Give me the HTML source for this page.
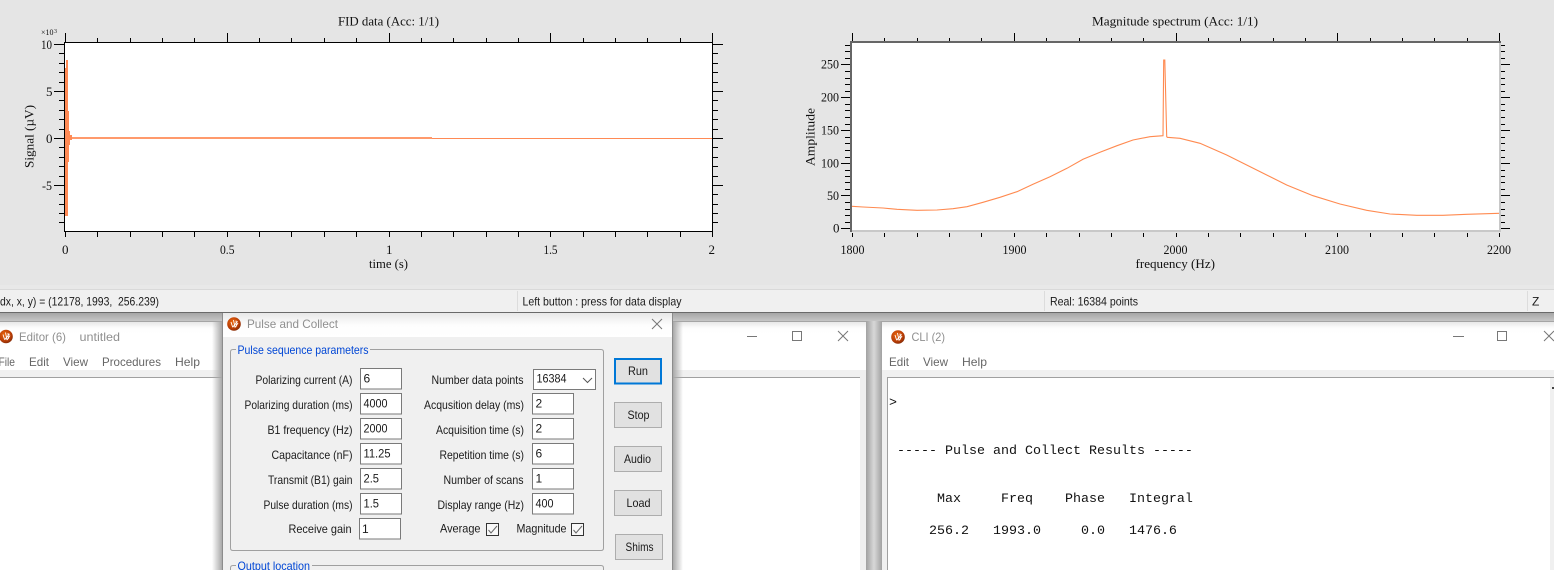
<!DOCTYPE html>
<html><head><meta charset="utf-8"><style>
html,body{margin:0;padding:0;width:1554px;height:570px;overflow:hidden;background:#e5e5e5}
svg{display:block}
.s{font-family:"Liberation Serif",serif;font-size:13px;fill:#111}
.u{font-family:"Liberation Sans",sans-serif;font-size:12px;fill:#1a1a1a;white-space:pre}
.g{font-family:"Liberation Sans",sans-serif;font-size:12px;fill:#8f8f8f}
.m{font-family:"Liberation Sans",sans-serif;font-size:12px;fill:#666}
.b{font-family:"Liberation Sans",sans-serif;font-size:12px;fill:#0046d5}
.c{font-family:"Liberation Mono",monospace;font-size:13.33px;fill:#111;white-space:pre}
</style></head><body>
<svg xmlns="http://www.w3.org/2000/svg" width="1554" height="570" viewBox="0 0 1554 570">
<defs>
<linearGradient id="band" x1="0" y1="0" x2="0" y2="1"><stop offset="0" stop-color="#a6a6a6"/><stop offset="1" stop-color="#c6c6c6"/></linearGradient>
<linearGradient id="gap" x1="0" y1="0" x2="1" y2="0"><stop offset="0" stop-color="#a8a8a8"/><stop offset=".5" stop-color="#d8d8d8"/><stop offset="1" stop-color="#a8a8a8"/></linearGradient>
<linearGradient id="tt" x1="0" y1="0" x2="0" y2="1"><stop offset="0" stop-color="#e8e8e8"/><stop offset=".5" stop-color="#fdfdfd"/><stop offset="1" stop-color="#fff"/></linearGradient>
<linearGradient id="shr" x1="0" y1="0" x2="1" y2="0"><stop offset="0" stop-color="#a9a9a9"/><stop offset="1" stop-color="#a9a9a9" stop-opacity="0"/></linearGradient>
<linearGradient id="shl" x1="1" y1="0" x2="0" y2="0"><stop offset="0" stop-color="#a9a9a9"/><stop offset="1" stop-color="#a9a9a9" stop-opacity="0"/></linearGradient>
<radialGradient id="ic" cx=".4" cy=".35" r=".7"><stop offset="0" stop-color="#e8640c"/><stop offset=".7" stop-color="#b63c06"/><stop offset="1" stop-color="#7d2a08"/></radialGradient>
<g id="icon"><circle cx="7" cy="7" r="6.8" fill="url(#ic)"/><path d="M4 5l1.6 5M6.5 3l1.5 7.5M9 3.5l.4 6M8 10.5l3-4.5M5.6 10.3l4.9-6" stroke="#fff" stroke-width=".9" fill="none"/></g>
</defs>

<!-- Left plot -->
<rect x="64.5" y="42.5" width="648" height="189" fill="#fff" stroke="#000"/>
<path fill="none" stroke="#000" d="M65.5 33V42M227.5 33V42M389.5 33V42M550.5 33V42M712.5 33V42M97.5 38V42M130.5 38V42M162.5 38V42M194.5 38V42M259.5 38V42M291.5 38V42M324.5 38V42M356.5 38V42M421.5 38V42M453.5 38V42M486.5 38V42M518.5 38V42M583.5 38V42M615.5 38V42M647.5 38V42M680.5 38V42"/>
<path fill="none" stroke="#000" d="M65.5 232V237M97.5 232V237M130.5 232V237M162.5 232V237M194.5 232V237M227.5 232V237M259.5 232V237M291.5 232V237M324.5 232V237M356.5 232V237M389.5 232V237M421.5 232V237M453.5 232V237M486.5 232V237M518.5 232V237M550.5 232V237M583.5 232V237M615.5 232V237M647.5 232V237M680.5 232V237M712.5 232V237"/>
<path fill="none" stroke="#000" d="M54 44.5H64M54 91.5H64M54 138.5H64M54 185.5H64M59 53.5H64M59 63.5H64M59 72.5H64M59 82.5H64M59 100.5H64M59 110.5H64M59 119.5H64M59 129.5H64M59 147.5H64M59 157.5H64M59 166.5H64M59 176.5H64M59 194.5H64M59 204.5H64M59 213.5H64M59 222.5H64"/>
<path fill="none" stroke="#000" d="M713 44.5H723M713 91.5H723M713 138.5H723M713 185.5H723M713 53.5H718M713 63.5H718M713 72.5H718M713 82.5H718M713 100.5H718M713 110.5H718M713 119.5H718M713 129.5H718M713 147.5H718M713 157.5H718M713 166.5H718M713 176.5H718M713 194.5H718M713 204.5H718M713 213.5H718M713 222.5H718"/>
<rect x="65" y="68" width="1.5" height="148" fill="#ff8a55"/><rect x="66" y="60" width="2" height="156" fill="#ff8a55"/>
<rect x="68" y="111" width="1" height="51" fill="#ff8a55"/><rect x="69" y="131" width="1" height="14" fill="#ff8a55"/><rect x="70" y="135" width="2" height="5" fill="#ff8a55"/>
<rect x="72" y="137" width="360" height="2" fill="#ff9a6c"/><rect x="432" y="138" width="280" height="1" fill="#ff8a55"/>

<text class="s" x="338" y="25.500" textLength="101" lengthAdjust="spacingAndGlyphs">FID data (Acc: 1/1)</text>
<text class="s" x="41" y="35" style="font-size:8px" textLength="12.5" lengthAdjust="spacingAndGlyphs">×10</text><text class="s" x="54" y="33" style="font-size:6px">3</text>
<text class="s" x="41" y="49" textLength="11" lengthAdjust="spacingAndGlyphs">10</text>
<text class="s" x="46" y="96">5</text><text class="s" x="46" y="143">0</text>
<text class="s" x="42" y="190" textLength="10" lengthAdjust="spacingAndGlyphs">-5</text>
<text class="s" x="62" y="254">0</text><text class="s" x="220" y="254" textLength="14.5" lengthAdjust="spacingAndGlyphs">0.5</text><text class="s" x="386" y="254">1</text><text class="s" x="543.5" y="254" textLength="14" lengthAdjust="spacingAndGlyphs">1.5</text><text class="s" x="708.5" y="254">2</text>
<text class="s" x="369" y="268" textLength="39" lengthAdjust="spacingAndGlyphs">time (s)</text>
<text class="s" transform="translate(33.5 168) rotate(-90)" textLength="63" lengthAdjust="spacingAndGlyphs">Signal (µV)</text>

<!-- Right plot -->
<rect x="851" y="42" width="649" height="189" fill="#fff"/>
<path fill="none" stroke="#c8c8c8" stroke-width="2" d="M852 231H1500V43"/>
<path fill="none" stroke="#666" stroke-width="2" d="M851 232V42H1501"/>
<path fill="none" stroke="#000" d="M852.5 33V41M1014.5 33V41M1176.5 33V41M1337.5 33V41M1499.5 33V41M884.5 38V41M917.5 38V41M949.5 38V41M981.5 38V41M1046.5 38V41M1079.5 38V41M1111.5 38V41M1143.5 38V41M1208.5 38V41M1240.5 38V41M1273.5 38V41M1305.5 38V41M1370.5 38V41M1402.5 38V41M1434.5 38V41M1467.5 38V41"/>
<path fill="none" stroke="#000" d="M852.5 233V237M884.5 233V237M917.5 233V237M949.5 233V237M981.5 233V237M1014.5 233V237M1046.5 233V237M1079.5 233V237M1111.5 233V237M1143.5 233V237M1176.5 233V237M1208.5 233V237M1240.5 233V237M1273.5 233V237M1305.5 233V237M1337.5 233V237M1370.5 233V237M1402.5 233V237M1434.5 233V237M1467.5 233V237M1499.5 233V237"/>
<path fill="none" stroke="#000" d="M841 64.5H850M841 97.5H850M841 130.5H850M841 163.5H850M841 195.5H850M841 228.5H850M845 45.5H850M845 51.5H850M845 58.5H850M845 71.5H850M845 78.5H850M845 84.5H850M845 91.5H850M845 104.5H850M845 110.5H850M845 117.5H850M845 124.5H850M845 137.5H850M845 143.5H850M845 150.5H850M845 157.5H850M845 170.5H850M845 176.5H850M845 182.5H850M845 189.5H850M845 202.5H850M845 209.5H850M845 215.5H850M845 222.5H850"/>
<path fill="none" stroke="#000" d="M1501 64.5H1510M1501 97.5H1510M1501 130.5H1510M1501 163.5H1510M1501 195.5H1510M1501 228.5H1510M1501 45.5H1505M1501 51.5H1505M1501 58.5H1505M1501 71.5H1505M1501 78.5H1505M1501 84.5H1505M1501 91.5H1505M1501 104.5H1505M1501 110.5H1505M1501 117.5H1505M1501 124.5H1505M1501 137.5H1505M1501 143.5H1505M1501 150.5H1505M1501 157.5H1505M1501 170.5H1505M1501 176.5H1505M1501 182.5H1505M1501 189.5H1505M1501 202.5H1505M1501 209.5H1505M1501 215.5H1505M1501 222.5H1505"/>
<path fill="none" stroke="#ff8a50" stroke-width="1.1" d="M852 206.3L863 207L883 208L897 209.3L917 210.3L937 210L953 208.7L967 206.7L983 202.3L1000 197.3L1017 191.7L1033 184.3L1050 176.7L1067 168.3L1083 159.3L1100 152.3L1117 145.7L1133 140L1150 136.7L1163 135.7L1163.7 60L1164.8 60L1166.7 136.5L1167.3 137.3L1180 138.3L1200 143.3L1226.7 155L1246.7 165L1266.7 175L1286.7 185L1313 195.7L1340 204L1366.7 210.3L1390 214L1416.7 215.3L1443 215.3L1466.7 214.3L1499 213.3"/>

<text class="s" x="1092" y="25.500" textLength="166" lengthAdjust="spacingAndGlyphs">Magnitude spectrum (Acc: 1/1)</text>
<text class="s" x="821" y="68.500" textLength="18" lengthAdjust="spacingAndGlyphs">250</text>
<text class="s" x="821" y="101.500" textLength="18" lengthAdjust="spacingAndGlyphs">200</text>
<text class="s" x="821" y="134.500" textLength="18" lengthAdjust="spacingAndGlyphs">150</text>
<text class="s" x="821" y="167.500" textLength="18" lengthAdjust="spacingAndGlyphs">100</text>
<text class="s" x="827" y="200" textLength="12" lengthAdjust="spacingAndGlyphs">50</text>
<text class="s" x="833" y="232.500">0</text>
<text class="s" x="840.500" y="254" textLength="24" lengthAdjust="spacingAndGlyphs">1800</text>
<text class="s" x="1002.500" y="254" textLength="24" lengthAdjust="spacingAndGlyphs">1900</text>
<text class="s" x="1163.500" y="254" textLength="24" lengthAdjust="spacingAndGlyphs">2000</text>
<text class="s" x="1325" y="254" textLength="24" lengthAdjust="spacingAndGlyphs">2100</text>
<text class="s" x="1487" y="254" textLength="24" lengthAdjust="spacingAndGlyphs">2200</text>
<text class="s" x="1135.500" y="268" textLength="79.500" lengthAdjust="spacingAndGlyphs">frequency (Hz)</text>
<text class="s" transform="translate(814.5 166) rotate(-90)" textLength="58" lengthAdjust="spacingAndGlyphs">Amplitude</text>

<!-- Status bar -->
<rect x="0" y="285" width="1554" height="4" fill="#e8e8e8"/>
<rect x="0" y="289" width="1554" height="1" fill="#d9d9d9"/>
<rect x="0" y="290" width="1554" height="22" fill="#f0f0f0"/>
<rect x="0" y="312" width="1554" height="1" fill="#6a6a6a"/>
<rect x="517" y="291" width="1" height="20" fill="#dcdcdc"/><rect x="1044" y="291" width="1" height="20" fill="#dcdcdc"/><rect x="1527" y="291" width="1" height="20" fill="#dcdcdc"/>
<text class="u" x="0" y="305.500" textLength="159" lengthAdjust="spacingAndGlyphs" xml:space="preserve">dx, x, y) = (12178, 1993,  256.239)</text>
<text class="u" x="522.500" y="305.500" textLength="159" lengthAdjust="spacingAndGlyphs">Left button : press for data display</text>
<text class="u" x="1050" y="305.500" textLength="88" lengthAdjust="spacingAndGlyphs">Real: 16384 points</text>
<text class="u" x="1532" y="305.500">Z</text>

<!-- Backdrop -->
<rect x="0" y="313" width="1554" height="8" fill="url(#band)"/>
<rect x="867" y="321" width="14" height="249" fill="url(#gap)"/>

<!-- Editor window -->
<rect x="0" y="321" width="867" height="249" fill="#fff"/>
<rect x="0" y="321" width="867" height="1" fill="#a5a5a5"/>
<rect x="866" y="321" width="1" height="249" fill="#a5a5a5"/>
<rect x="0" y="322" width="866" height="12" fill="url(#tt)"/>
<rect x="0" y="370" width="866" height="200" fill="#f0f0f0"/>
<rect x="0" y="377" width="860" height="193" fill="#fff"/>
<rect x="0" y="377" width="860" height="1" fill="#a0a0a0"/>
<use href="#icon" x="-1" y="329.500"/>
<text class="g" x="19" y="341" textLength="47" lengthAdjust="spacingAndGlyphs">Editor (6)</text>
<text class="g" x="79.500" y="341" textLength="40.500" lengthAdjust="spacingAndGlyphs">untitled</text>
<text class="m" x="-1.500" y="366" textLength="16.500" lengthAdjust="spacingAndGlyphs">File</text>
<text class="m" x="29" y="366" textLength="20" lengthAdjust="spacingAndGlyphs">Edit</text>
<text class="m" x="63" y="366" textLength="25" lengthAdjust="spacingAndGlyphs">View</text>
<text class="m" x="102" y="366" textLength="59" lengthAdjust="spacingAndGlyphs">Procedures</text>
<text class="m" x="175" y="366" textLength="25" lengthAdjust="spacingAndGlyphs">Help</text>
<path fill="none" stroke="#777" d="M747 336.500H757M792.500 331.500H801.500V340.500H792.500ZM838 331L848 341M848 331L838 341"/>

<!-- CLI window -->
<rect x="881" y="321" width="673" height="249" fill="#fff"/>
<rect x="881" y="321" width="673" height="1" fill="#a5a5a5"/>
<rect x="881" y="321" width="1" height="249" fill="#a5a5a5"/>
<rect x="882" y="322" width="672" height="12" fill="url(#tt)"/>
<rect x="882" y="370" width="672" height="200" fill="#f0f0f0"/>
<rect x="887" y="377" width="663" height="193" fill="#fff"/>
<rect x="887" y="377" width="667" height="1" fill="#a0a0a0"/>
<rect x="887" y="377" width="1" height="193" fill="#a0a0a0"/>
<rect x="1552" y="387" width="2" height="2" fill="#444"/>
<use href="#icon" x="891" y="330"/>
<text class="g" x="911.500" y="341" textLength="33.500" lengthAdjust="spacingAndGlyphs">CLI (2)</text>
<text class="m" x="889" y="366" textLength="20" lengthAdjust="spacingAndGlyphs">Edit</text>
<text class="m" x="923" y="366" textLength="25" lengthAdjust="spacingAndGlyphs">View</text>
<text class="m" x="962" y="366" textLength="25" lengthAdjust="spacingAndGlyphs">Help</text>
<path fill="none" stroke="#777" d="M1453 336.500H1464M1497.500 331.500H1506.500V340.500H1497.500ZM1544 331L1554 341M1554 331L1544 341"/>
<text class="c" x="889" y="406">&gt;</text>
<text class="c" x="889" y="454" xml:space="preserve"> ----- Pulse and Collect Results -----</text>
<text class="c" x="889" y="502" xml:space="preserve">      Max     Freq    Phase   Integral</text>
<text class="c" x="889" y="534" xml:space="preserve">     256.2   1993.0     0.0   1476.6</text>

<!-- Dialog shadow -->
<rect x="212" y="322" width="10" height="248" fill="url(#shl)"/>
<rect x="673" y="322" width="10" height="248" fill="url(#shr)"/>

<!-- Dialog -->
<rect x="222" y="313" width="451" height="257" fill="#f0f0f0"/>
<rect x="222" y="313" width="1" height="257" fill="#8c8c8c"/>
<rect x="672" y="313" width="1" height="257" fill="#8c8c8c"/>
<rect x="223" y="313" width="449" height="24" fill="url(#tt)"/>
<use href="#icon" x="227" y="317"/>
<text class="g" x="247" y="328" textLength="91" lengthAdjust="spacingAndGlyphs">Pulse and Collect</text>
<path fill="none" stroke="#777" d="M652 319L662 329M662 319L652 329"/>

<path fill="none" stroke="#a0a0a0" d="M236 349.500H233Q230.500 349.500 230.500 352V548Q230.500 550.500 233 550.500H601Q603.500 550.500 603.500 548V352Q603.500 349.500 601 349.500H370"/>
<text class="b" x="237.500" y="354" textLength="131" lengthAdjust="spacingAndGlyphs">Pulse sequence parameters</text>
<path fill="none" stroke="#a0a0a0" d="M236 565.500H233Q230.500 565.500 230.500 568V570M312 565.500H601Q603.500 565.500 603.500 568V570"/>
<text class="b" x="237.500" y="570" textLength="72.500" lengthAdjust="spacingAndGlyphs">Output location</text>

<!-- Left labels -->
<text class="u" x="255.500" y="384" textLength="97" lengthAdjust="spacingAndGlyphs">Polarizing current (A)</text>
<text class="u" x="244.500" y="409" textLength="108" lengthAdjust="spacingAndGlyphs">Polarizing duration (ms)</text>
<text class="u" x="267.500" y="434" textLength="85" lengthAdjust="spacingAndGlyphs">B1 frequency (Hz)</text>
<text class="u" x="271.500" y="459" textLength="81" lengthAdjust="spacingAndGlyphs">Capacitance (nF)</text>
<text class="u" x="268" y="484" textLength="84.500" lengthAdjust="spacingAndGlyphs">Transmit (B1) gain</text>
<text class="u" x="263.500" y="509" textLength="89" lengthAdjust="spacingAndGlyphs">Pulse duration (ms)</text>
<text class="u" x="288.500" y="533" textLength="63" lengthAdjust="spacingAndGlyphs">Receive gain</text>

<!-- Left inputs -->
<g fill="#fff" stroke="#7a7a7a">
<rect x="360.500" y="368.500" width="41" height="20.500"/>
<rect x="360.500" y="393.500" width="41" height="20.500"/>
<rect x="360.500" y="418.500" width="41" height="20.500"/>
<rect x="360.500" y="443.500" width="41" height="20.500"/>
<rect x="360.500" y="468.500" width="41" height="20.500"/>
<rect x="360.500" y="493.500" width="41" height="20.500"/>
<rect x="359.500" y="518.500" width="41" height="20.500"/>
<rect x="532.500" y="393.500" width="41" height="20.500"/>
<rect x="532.500" y="418.500" width="41" height="20.500"/>
<rect x="532.500" y="443.500" width="41" height="20.500"/>
<rect x="532.500" y="468.500" width="41" height="20.500"/>
<rect x="532.500" y="493.500" width="41" height="20.500"/>
<rect x="533.500" y="369.500" width="62" height="20"/>
</g>
<text class="u" x="363.500" y="382.500">6</text>
<text class="u" x="363.500" y="407.500" textLength="24" lengthAdjust="spacingAndGlyphs">4000</text>
<text class="u" x="363.500" y="432.500" textLength="24" lengthAdjust="spacingAndGlyphs">2000</text>
<text class="u" x="363.500" y="457.500" textLength="27" lengthAdjust="spacingAndGlyphs">11.25</text>
<text class="u" x="363.500" y="482.500" textLength="15.500" lengthAdjust="spacingAndGlyphs">2.5</text>
<text class="u" x="363.500" y="507.500" textLength="15.500" lengthAdjust="spacingAndGlyphs">1.5</text>
<text class="u" x="362" y="533">1</text>

<!-- Right labels -->
<text class="u" x="431.500" y="384" textLength="92" lengthAdjust="spacingAndGlyphs">Number data points</text>
<text class="u" x="424" y="409" textLength="100" lengthAdjust="spacingAndGlyphs">Acqusition delay (ms)</text>
<text class="u" x="436" y="434" textLength="88" lengthAdjust="spacingAndGlyphs">Acquisition time (s)</text>
<text class="u" x="439.500" y="459" textLength="84.500" lengthAdjust="spacingAndGlyphs">Repetition time (s)</text>
<text class="u" x="443.500" y="484" textLength="80" lengthAdjust="spacingAndGlyphs">Number of scans</text>
<text class="u" x="437.500" y="509" textLength="86.500" lengthAdjust="spacingAndGlyphs">Display range (Hz)</text>
<text class="u" x="440" y="532.500" textLength="40.500" lengthAdjust="spacingAndGlyphs">Average</text>
<text class="u" x="516.500" y="532.500" textLength="50" lengthAdjust="spacingAndGlyphs">Magnitude</text>

<text class="u" x="536.500" y="382.500" textLength="30" lengthAdjust="spacingAndGlyphs">16384</text>
<path fill="none" stroke="#555" d="M583 378L587.500 382.500L592 378"/>
<text class="u" x="535.500" y="407.500">2</text>
<text class="u" x="535.500" y="432.500">2</text>
<text class="u" x="535.500" y="457.500">6</text>
<text class="u" x="535.500" y="482.500">1</text>
<text class="u" x="535.500" y="507.500" textLength="18" lengthAdjust="spacingAndGlyphs">400</text>

<!-- Checkboxes -->
<rect x="486.500" y="523.500" width="12" height="12" fill="#f8f8f8" stroke="#333"/>
<path fill="none" stroke="#666" d="M488.500 530L491 533L497 526"/>
<rect x="571.500" y="523.500" width="12" height="12" fill="#f8f8f8" stroke="#333"/>
<path fill="none" stroke="#666" d="M573.500 530L576 533L582 526"/>

<!-- Buttons -->
<g fill="#e1e1e1" stroke="#adadad">
<rect x="614.500" y="402.500" width="47" height="25"/>
<rect x="614.500" y="446.500" width="47" height="25"/>
<rect x="614.500" y="490.500" width="47" height="25"/>
<rect x="615.500" y="534.500" width="47" height="25"/>
</g>
<rect x="615" y="359" width="46" height="24.500" fill="#e1e1e1" stroke="#0078d7" stroke-width="2"/>
<text class="u" x="628" y="375" textLength="20" lengthAdjust="spacingAndGlyphs">Run</text>
<text class="u" x="627.500" y="419" textLength="22" lengthAdjust="spacingAndGlyphs">Stop</text>
<text class="u" x="624" y="463" textLength="27" lengthAdjust="spacingAndGlyphs">Audio</text>
<text class="u" x="626.500" y="507" textLength="24" lengthAdjust="spacingAndGlyphs">Load</text>
<text class="u" x="625.500" y="551" textLength="28" lengthAdjust="spacingAndGlyphs">Shims</text>
</svg>
</body></html>
